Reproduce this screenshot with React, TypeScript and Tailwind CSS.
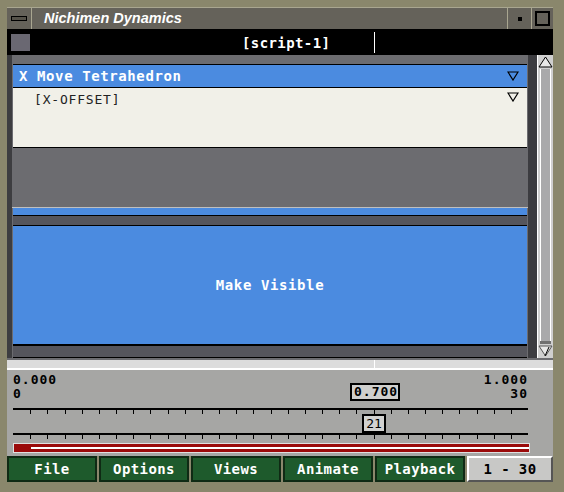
import React from "react";

const mono = { fontFamily: '"DejaVu Sans Mono", "Liberation Mono", monospace' };

function DownTri({ className = "" }: { className?: string }) {
  return (
    <svg width="12" height="10" viewBox="0 0 12 10" className={className}>
      <polygon points="1,1 11,1 6,9" fill="none" stroke="#000" strokeWidth="1.2" />
    </svg>
  );
}

function Ruler() {
  const ticks = Array.from({ length: 29 }, (_, i) => i + 1);
  return (
    <div className="relative h-[6px] w-[515px]">
      <div className="h-[2px] w-full bg-black" />
      {ticks.map((i) => (
        <div
          key={i}
          className="absolute top-[2px] h-[4px] w-[1px] bg-black"
          style={{ left: Math.round(i * 17.17) }}
        />
      ))}
    </div>
  );
}

const buttons = ["File", "Options", "Views", "Animate", "Playback"];

export default function App() {
  return (
    <div className="flex h-[492px] w-[564px] flex-col bg-[#8a876c] pl-[7px] pr-[11px] pt-[7px]" style={mono}>
      {/* title bar */}
      <div className="flex h-[22px] bg-[#65625a] border-t border-[#a9a690]">
        <div className="flex w-[25px] items-center justify-center border-r border-[#a9a690]">
          <div className="h-[5px] w-[16px] border border-black bg-[#55524a]" />
        </div>
        <div
          className="flex flex-1 items-center pl-[12px] text-[14.5px] font-bold italic text-white"
          style={{ fontFamily: '"Liberation Sans", Arial, sans-serif' }}
        >
          Nichimen Dynamics
        </div>
        <div className="flex w-[24px] items-center justify-center border-l border-[#a9a690]">
          <div className="h-[4px] w-[4px] bg-black" />
        </div>
        <div className="flex w-[22px] items-center justify-center border-l border-[#a9a690]">
          <div className="h-[15px] w-[15px] border-2 border-black" />
        </div>
      </div>

      {/* black bar */}
      <div className="relative flex h-[26px] items-center bg-black">
        <div className="ml-[4px] h-[17px] w-[19px] bg-[#6a6872]" />
        <div className="absolute left-[235px] top-[4px] text-[14px] font-bold tracking-[0.4px] text-white">[script-1]</div>
        <div className="absolute left-[367px] top-[3px] h-[21px] w-[1px] bg-white" />
      </div>

      {/* content */}
      <div className="flex h-[303px]">
        <div className="w-[5px] bg-[#3d3d40]" />
        <div className="flex w-[516px] flex-col bg-[#6c6c70]">
          <div className="h-[9px]" />
          <div className="mx-[1px] flex h-[24px] items-center justify-between border-y border-black bg-[#4b8be0] pl-[6px] pr-[8px] text-[14px] font-bold tracking-[0.6px] text-white">
            <span>X Move Tetrahedron</span>
            <DownTri />
          </div>
          <div className="mx-[1px] flex h-[60px] items-start justify-between border-b border-black bg-[#f1f0e8] pl-[21px] pr-[8px] pt-[2px] text-[13px] tracking-[0.8px] text-[#222]">
            <span>[X-OFFSET]</span>
            <DownTri className="mt-[2px]" />
          </div>
          <div className="h-[60px] border-b border-[#bfbfbf]" />
          <div className="mx-[1px] h-[8px] border-b border-black bg-[#4b8be0]" />
          <div className="mx-[1px] h-[10px] border-b border-black bg-[#55555c]" />
          <div className="mx-[1px] flex h-[120px] items-center justify-center border-b-2 border-black bg-[#4b8be0] text-[14px] font-bold tracking-[0.6px] text-white">
            Make Visible
          </div>
          <div className="mx-[1px] flex-1 border-b border-black bg-[#55555c]" />
        </div>
        <div className="w-[9px] bg-[#3c3c40]" />
        <div className="flex w-[16px] flex-col border-l border-white bg-[#cfcfcf]">
          <svg width="15" height="14" viewBox="0 0 15 14">
            <polygon points="1,12 14,12 7.5,2" fill="#e8e8e8" stroke="#000" strokeWidth="1" />
          </svg>
          <div className="mx-[2px] flex-1 border-x border-white bg-[#a9a9ab]" />
          <div className="mx-[2px] h-[3px] bg-[#707070]" />
          <svg width="15" height="14" viewBox="0 0 15 14">
            <polygon points="1,2 14,2 7.5,12" fill="#e8e8e8" stroke="#555" strokeWidth="1" />
            <line x1="11" y1="3" x2="7" y2="12" stroke="#000" strokeWidth="1" />
          </svg>
        </div>
      </div>

      {/* slider track */}
      <div className="relative h-[12px] border-t-2 border-[#6c6c70] border-b-2 border-b-white bg-[#dcdcdc]">
        <div className="absolute left-[367px] top-0 h-full w-[1px] bg-white" />
      </div>

      {/* value panel */}
      <div className="relative flex h-[86px] flex-col bg-[#a6a6a4] pl-[6px] pt-[3px] text-[13px] font-bold leading-[14px] tracking-[1px] text-black">
        <div className="flex w-[515px] justify-between">
          <div>
            <div>0.000</div>
            <div>0</div>
          </div>
          <div className="text-right">
            <div>1.000</div>
            <div>30</div>
          </div>
        </div>
        <div className="absolute left-[343px] top-[13px] border-2 border-black bg-[#cfcfcd] pl-[2px] leading-[14px]">
          0.700
        </div>
        <div className="mt-[7px]">
          <Ruler />
        </div>
        <div className="ml-[349px] h-[19px] w-[24px] border-2 border-black bg-[#d2d2d0] text-center font-normal leading-[15px] tracking-normal">
          21
        </div>
        <Ruler />
        <div className="mt-[4px] flex h-[10px] w-[517px] items-center border border-[#e0e0e0] bg-[#9a0a0a]">
          <div className="ml-[17px] h-[2px] flex-1 bg-white" />
        </div>
      </div>

      {/* buttons */}
      <div className="flex h-[26px] gap-[2px]">
        {buttons.map((b) => (
          <div
            key={b}
            className="flex w-[90px] items-center justify-center border-2 border-[#0f2a14] bg-[#1e5a2c] text-[14px] font-bold tracking-[0.4px] text-white"
          >
            {b}
          </div>
        ))}
        <div className="flex flex-1 items-center justify-center border-2 border-l-white border-t-white border-[#555] bg-[#c8c8c6] text-[14px] font-bold tracking-[0.4px] text-black">
          1 - 30
        </div>
      </div>
    </div>
  );
}
